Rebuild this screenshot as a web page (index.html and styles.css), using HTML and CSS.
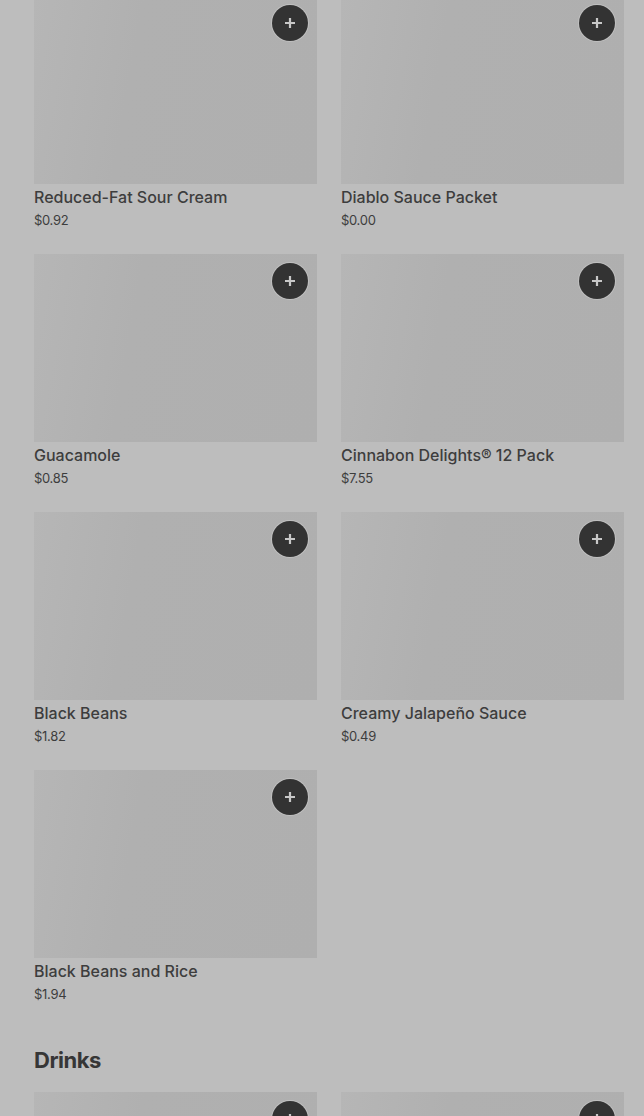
FILE: index.html
```html
<!DOCTYPE html>
<html lang="en">
<head>
<meta charset="utf-8">
<title>Menu</title>
<link rel="stylesheet" href="styles.css">
</head>
<body>
<div class="menu">
  <section class="section">
    <div class="grid">
      <div class="item">
        <div class="thumb"><button class="add"><svg viewBox="0 0 12 12"><path d="M6 1v10M1 6h10"/></svg></button></div>
        <div class="name">Reduced-Fat Sour Cream</div>
        <div class="price">$0.92</div>
      </div>
      <div class="item">
        <div class="thumb"><button class="add"><svg viewBox="0 0 12 12"><path d="M6 1v10M1 6h10"/></svg></button></div>
        <div class="name">Diablo Sauce Packet</div>
        <div class="price">$0.00</div>
      </div>
      <div class="item">
        <div class="thumb"><button class="add"><svg viewBox="0 0 12 12"><path d="M6 1v10M1 6h10"/></svg></button></div>
        <div class="name">Guacamole</div>
        <div class="price">$0.85</div>
      </div>
      <div class="item">
        <div class="thumb"><button class="add"><svg viewBox="0 0 12 12"><path d="M6 1v10M1 6h10"/></svg></button></div>
        <div class="name">Cinnabon Delights® 12 Pack</div>
        <div class="price">$7.55</div>
      </div>
      <div class="item">
        <div class="thumb"><button class="add"><svg viewBox="0 0 12 12"><path d="M6 1v10M1 6h10"/></svg></button></div>
        <div class="name">Black Beans</div>
        <div class="price">$1.82</div>
      </div>
      <div class="item">
        <div class="thumb"><button class="add"><svg viewBox="0 0 12 12"><path d="M6 1v10M1 6h10"/></svg></button></div>
        <div class="name">Creamy Jalapeño Sauce</div>
        <div class="price">$0.49</div>
      </div>
      <div class="item">
        <div class="thumb"><button class="add"><svg viewBox="0 0 12 12"><path d="M6 1v10M1 6h10"/></svg></button></div>
        <div class="name">Black Beans and Rice</div>
        <div class="price">$1.94</div>
      </div>
    </div>
  </section>
  <section class="section">
    <h2 class="title">Drinks</h2>
    <div class="grid">
      <div class="item">
        <div class="thumb"><button class="add"><svg viewBox="0 0 12 12"><path d="M6 1v10M1 6h10"/></svg></button></div>
      </div>
      <div class="item">
        <div class="thumb"><button class="add"><svg viewBox="0 0 12 12"><path d="M6 1v10M1 6h10"/></svg></button></div>
      </div>
    </div>
  </section>
</div>
</body>
</html>
```

FILE: styles.css
```css
html, body {
    margin: 0;
    background: #bdbdbd;
    overflow: hidden;
}
body {
    font-family: Inter, "Liberation Sans", sans-serif;
    color: #333;
}
.menu {
    margin-top: -4px;
    padding: 0 20px 0 34px;
}
.section + .section {
    margin-top: 40px;
}
.title {
    margin: 0 0 16px;
    font-size: 22px;
    line-height: 32px;
    font-weight: 700;
    letter-spacing: -0.5px;
    color: #363636;
}
.grid {
    display: grid;
    grid-template-columns: 283px 283px;
    column-gap: 24px;
    row-gap: 24px;
}
.thumb {
    position: relative;
    height: 188px;
    background: linear-gradient(100deg, #b6b6b6 0%, #b0b0b0 35%, #afafaf 100%);
}
.add {
    position: absolute;
    top: 9px;
    right: 9px;
    width: 36px;
    height: 36px;
    padding: 0;
    border: none;
    border-radius: 50%;
    background: #333;
    box-shadow: 0 0 0 1px rgba(210,210,210,0.5);
    display: flex;
    align-items: center;
    justify-content: center;
}
.add svg {
    width: 12px;
    height: 12px;
    stroke: #c8c8c8;
    stroke-width: 2.2;
    fill: none;
}
.name {
    margin-top: 3px;
    font-size: 16px;
    line-height: 20px;
    font-weight: 500;
    color: #3d3d3d;
}
.price {
    margin-top: 3px;
    font-size: 13px;
    line-height: 20px;
    color: #3d3d3d;
    letter-spacing: -0.3px;
}
```
